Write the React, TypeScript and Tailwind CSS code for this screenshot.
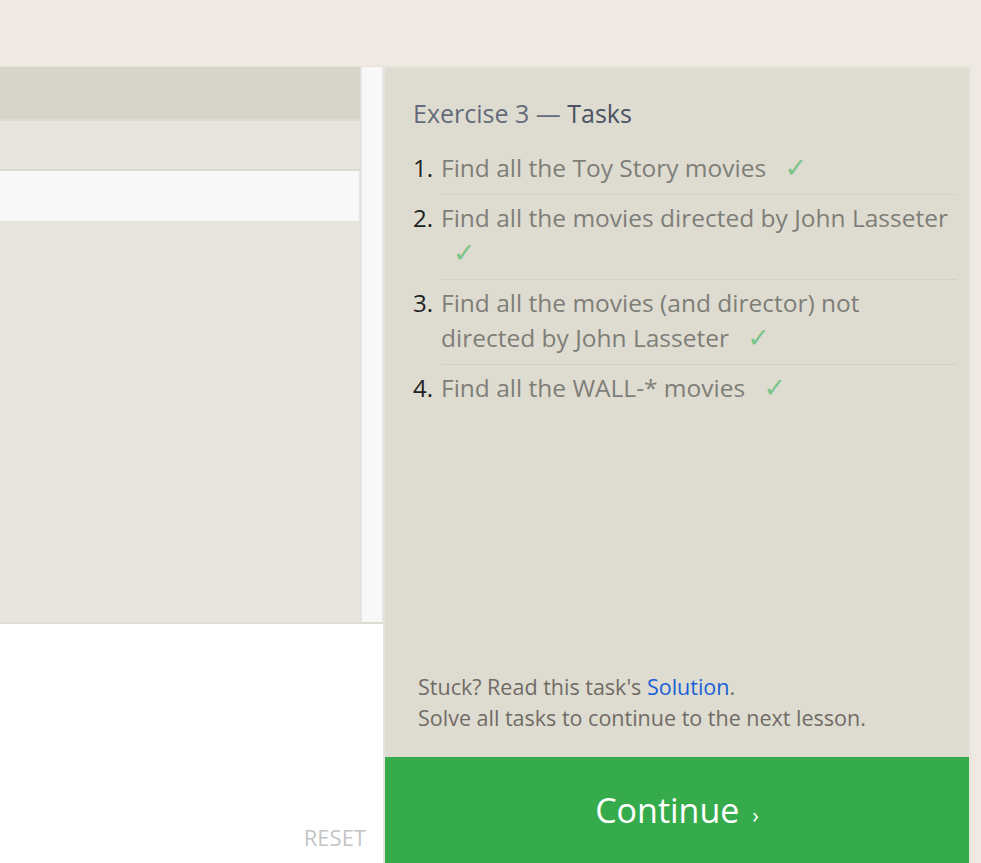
import { ReactNode } from "react";

const tasks: { text: string }[] = [
  { text: "Find all the Toy Story movies" },
  { text: "Find all the movies directed by John Lasseter" },
  { text: "Find all the movies (and director) not directed by John Lasseter" },
  { text: "Find all the WALL-* movies" },
];

function Check() {
  return (
    <span
      className="ml-[12px] text-[27px] leading-none text-[#7cc58a]"
      style={{ fontFamily: '"DejaVu Sans", sans-serif' }}
    >
      ✓
    </span>
  );
}

function TaskItem({ n, children, last }: { n: number; children: ReactNode; last?: boolean }) {
  return (
    <li className="flex">
      <span className="w-[28px] shrink-0 text-[24px] text-[#222222]">{n}.</span>
      <div className={`flex-1 pb-[9px] ${last ? "" : "border-b border-[#d3d1c6]"}`}>{children}</div>
    </li>
  );
}

export default function App() {
  return (
    <div
      className="h-[863px] w-[981px] overflow-hidden bg-[#eeeae3] pt-[66px] flex"
      style={{ fontFamily: '"Open Sans", sans-serif' }}
    >
      {/* Left editor column */}
      <div className="w-[383px] shrink-0 flex flex-col">
        <div className="h-[558px] flex border-t border-[#e2e0d8] border-b-2 border-b-[#dddcd2]">
          <div className="w-[361px] flex flex-col bg-[#e7e6de] border-r border-[#e0e0dc]">
            <div className="h-[54px] bg-[#d5d5c9] border-b-2 border-[#dcdcd4]" />
            <div className="h-[50px] bg-[#e7e6de] border-b-2 border-[#dad9d2]" />
            <div className="h-[50px] bg-[#f8f8f8] border-r border-[#e6e6e6]" />
            <div className="flex-1" />
          </div>
          <div className="w-[22px] bg-[#f8f8f8] border-l border-r border-[#e8e8e6]" />
        </div>
        <div className="flex-1 bg-white flex items-end justify-end pr-[17px] pb-[15px]">
          <span className="text-[#c4c4c4] text-[22px] leading-none">RESET</span>
        </div>
      </div>

      {/* Right tasks panel */}
      <div className="w-[588px] shrink-0 border-2 border-b-0 border-[#e6e4dc] bg-[#dedcd1] flex flex-col">
        <div className="flex-1 pl-[28px] pr-[12px] pt-[28px] text-[24.5px] leading-[35px]">
          <h2 className="text-[25px] leading-[34px] text-[#646b7a] mb-[20px]">
            Exercise 3 — <span className="text-[#4b5263]">Tasks</span>
          </h2>
          <ol className="flex flex-col gap-[5px] text-[#7e7e78]">
            {tasks.map((t, i) => (
              <TaskItem key={i} n={i + 1} last={i === tasks.length - 1}>
                {t.text} <Check />
              </TaskItem>
            ))}
          </ol>
        </div>
        <div className="pl-[33px] pb-[24px] text-[21.5px] leading-[31px] text-[#716b66]">
          <p>
            Stuck? Read this task's <span className="text-[#1a5fd6]">Solution</span>.
          </p>
          <p>Solve all tasks to continue to the next lesson.</p>
        </div>
        <div className="h-[106px] bg-[#35ab4b] flex items-start justify-center pt-[28px]">
          <span className="text-white text-[34px] leading-[50px]">
            Continue <span className="text-[22px] align-middle ml-[4px]">›</span>
          </span>
        </div>
      </div>
    </div>
  );
}
